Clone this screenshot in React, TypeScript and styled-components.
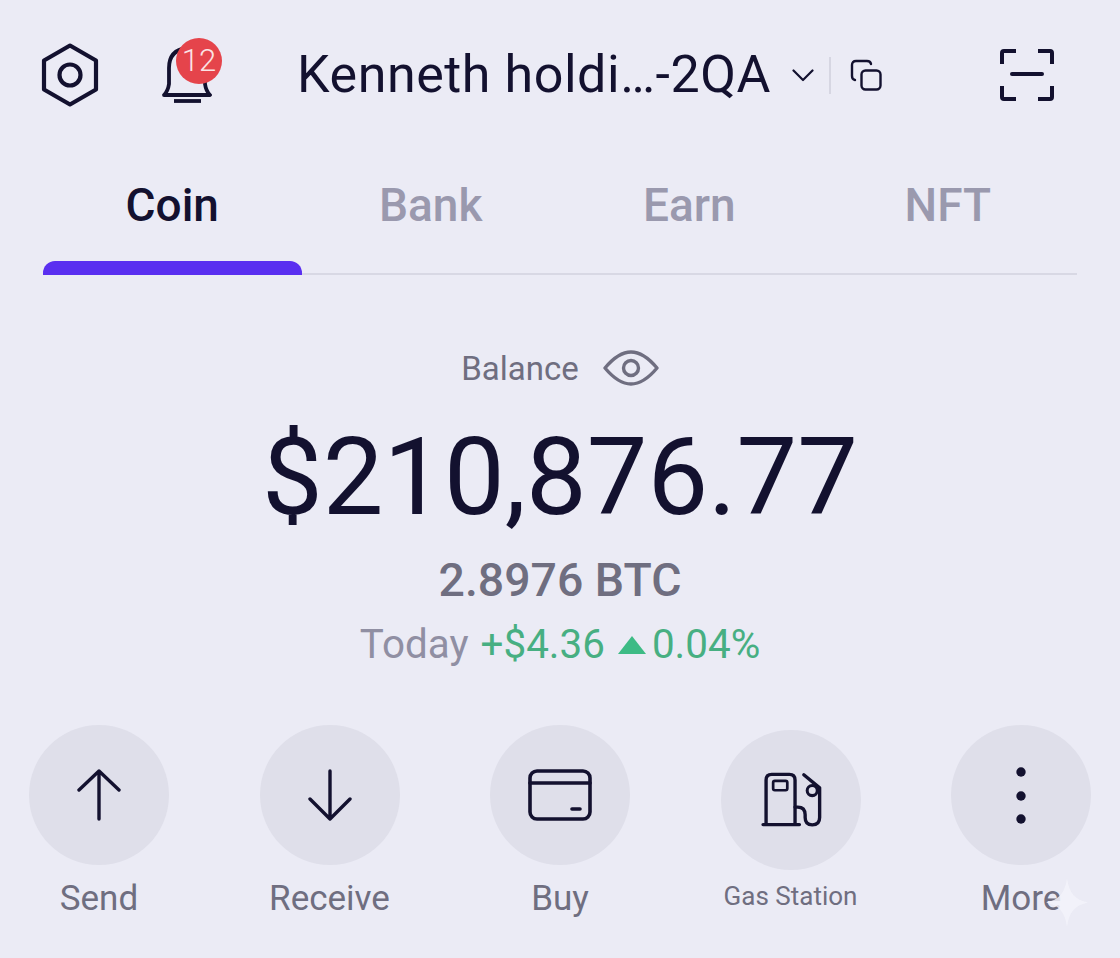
import React from "react";
import styled, { createGlobalStyle } from "styled-components";

const Global = createGlobalStyle`
  html, body { margin: 0; padding: 0; background: #ebebf5; }
  * { box-sizing: border-box; }
`;

const Page = styled.div`
  width: 1120px;
  height: 958px;
  overflow: hidden;
  position: relative;
  background: #ebebf5;
  font-family: Roboto, "Liberation Sans", sans-serif;
  color: #13112f;
`;

const Header = styled.header`
  display: flex;
  align-items: center;
  height: 70px;
  margin-top: 40px;
  padding: 0 66px 0 41px;
`;

const BellWrap = styled.div`
  position: relative;
  width: 50px;
  height: 70px;
  margin-left: 63px;
`;

const Badge = styled.span`
  position: absolute;
  left: 14px;
  top: -2px;
  width: 46px;
  height: 46px;
  border-radius: 50%;
  background: #e5444b;
  color: #fbe3e4;
  font-size: 31px;
  font-weight: 300;
  line-height: 46px;
  text-align: center;
`;

const Account = styled.h1`
  margin: 0 0 0 85px;
  font-size: 52px;
  font-weight: 400;
  line-height: 70px;
  white-space: nowrap;
  letter-spacing: 0.55px;
`;

const Chevron = styled.svg`
  margin-left: 21px;
  flex: none;
`;

const Divider = styled.span`
  width: 2px;
  height: 37px;
  margin: 0 19px 0 15px;
  background: #d6d6e2;
  flex: none;
`;

const Spring = styled.div`
  flex: 1;
`;

const Tabs = styled.nav`
  display: grid;
  grid-template-columns: repeat(4, 1fr);
  margin: 47px 43px 0;
  border-bottom: 2px solid #d8d8e4;
`;

const Tab = styled.div<{ $active?: boolean }>`
  position: relative;
  height: 116px;
  padding-top: 20px;
  text-align: center;
  font-size: 46px;
  font-weight: 500;
  line-height: 56px;
  color: ${(p) => (p.$active ? "#13112f" : "#9a99ae")};
  ${(p) =>
    p.$active &&
    `&::after {
      content: "";
      position: absolute;
      left: 0;
      right: 0;
      bottom: -2px;
      height: 14px;
      background: #5a2ff0;
      border-radius: 12px 12px 0 0;
    }`}
`;

const Summary = styled.section`
  display: flex;
  flex-direction: column;
  align-items: center;
`;

const BalanceRow = styled.div`
  display: flex;
  align-items: center;
  gap: 24px;
  margin-top: 68px;
  height: 50px;
  font-size: 33px;
  color: #6f6e80;
`;

const Amount = styled.div`
  margin-top: 19px;
  font-size: 108px;
  line-height: 130px;
  font-weight: 400;
`;

const Crypto = styled.div`
  margin-top: 11px;
  font-size: 46.4px;
  font-weight: 500;
  line-height: 54px;
  color: #6f6e80;
`;

const Change = styled.div`
  display: flex;
  align-items: center;
  margin-top: 13px;
  font-size: 40.4px;
  line-height: 50px;
  color: #47af82;
`;

const Today = styled.span`
  color: #908fa3;
  margin-right: 12px;
`;

const Triangle = styled.svg`
  margin: 0 6px 0 13px;
  flex: none;
`;

const Actions = styled.section`
  display: flex;
  justify-content: space-between;
  padding: 0 29px;
  margin-top: 55px;
`;

const Action = styled.div`
  width: 140px;
  display: flex;
  flex-direction: column;
  align-items: center;
`;

const Circle = styled.div<{ $low?: boolean }>`
  width: 140px;
  height: 140px;
  margin-top: ${(p) => (p.$low ? "5px" : "0")};
  border-radius: 50%;
  background: #dfdfea;
  display: flex;
  align-items: center;
  justify-content: center;
`;

const Label = styled.div<{ $small?: boolean }>`
  margin-top: ${(p) => (p.$small ? "6px" : "14px")};
  height: 40px;
  line-height: 40px;
  font-size: ${(p) => (p.$small ? "26px" : "35px")};
  color: #6f6e80;
  white-space: nowrap;
`;

const Sparkle = styled.svg`
  position: absolute;
  left: 1046px;
  top: 878px;
`;

const ink = { fill: "none", stroke: "#13112f", strokeLinecap: "round", strokeLinejoin: "round" } as const;

const actions = [
  {
    label: "Send",
    icon: (
      <svg width="44" height="52" viewBox="0 0 44 52" {...ink} strokeWidth="3.4">
        <path d="M22 2V50M2 21L22 2L42 21" />
      </svg>
    ),
  },
  {
    label: "Receive",
    icon: (
      <svg width="44" height="52" viewBox="0 0 44 52" {...ink} strokeWidth="3.4">
        <path d="M22 2V50M2 30L22 50L42 30" />
      </svg>
    ),
  },
  {
    label: "Buy",
    icon: (
      <svg width="64" height="52" viewBox="0 0 64 52" {...ink} strokeWidth="3.6">
        <rect x="2" y="2" width="60" height="48" rx="7" />
        <path d="M2 14H62M44 40H52" />
      </svg>
    ),
  },
  {
    label: "Gas Station",
    small: true,
    low: true,
    icon: (
      <svg width="64" height="59" viewBox="835 155 190 175" {...ink} strokeWidth="10">
        <path d="M847 314H955M856 314V182Q856 165 873 165H925Q942 165 942 182V314" />
        <rect x="877" y="184" width="42" height="28" rx="5" strokeWidth="8" />
        <path d="M942 262H950Q972 262 972 285V293Q972 315 993 315Q1015 315 1015 293V205L968 166" />
        <circle cx="993" cy="213" r="15" strokeWidth="9" />
      </svg>
    ),
  },
  {
    label: "More",
    icon: (
      <svg width="10" height="58" viewBox="0 0 10 58" fill="#13112f">
        <circle cx="5" cy="6" r="4.7" />
        <circle cx="5" cy="30" r="4.7" />
        <circle cx="5" cy="53" r="4.7" />
      </svg>
    ),
  },
];

export default function App() {
  return (
    <Page>
      <Global />
      <Header>
        <svg width="58" height="64" viewBox="0 0 58 64" {...ink} strokeWidth="4.2">
          <path d="M29 2.5L55 17.5V46.5L29 61.5L3 46.5V17.5Z" />
          <circle cx="29" cy="32" r="10.5" />
        </svg>
        <BellWrap>
          <svg width="50" height="70" viewBox="0 0 50 70" {...ink} strokeWidth="3.8">
            <path d="M2 55Q6 51 7 44V28Q7 10 25 8Q43 10 43 28V44Q44 51 48 55Z" />
            <path d="M12 61H39" strokeLinecap="butt" />
          </svg>
          <Badge>12</Badge>
        </BellWrap>
        <Account>Kenneth holdi…-2QA</Account>
        <Chevron width="22" height="13" viewBox="0 0 22 13" {...ink} strokeWidth="2.2">
          <path d="M1.5 1.5L11 11L20.5 1.5" />
        </Chevron>
        <Divider />
        <svg width="32" height="32" viewBox="0 0 32 32" {...ink} strokeWidth="2.4">
          <rect x="11.5" y="11.5" width="19" height="19" rx="4" />
          <path d="M5 21Q2 20.5 2 17V6Q2 2 6 2H17Q20.5 2 21 5" />
        </svg>
        <Spring />
        <svg width="54" height="52" viewBox="0 0 54 52" {...ink} strokeWidth="4" strokeLinecap="butt">
          <path d="M2 15V4Q2 2 4 2H16M38 2H50Q52 2 52 4V15M2 37V48Q2 50 4 50H16M38 50H50Q52 50 52 48V37" />
          <path d="M12 25H42" strokeLinecap="round" />
        </svg>
      </Header>
      <Tabs>
        <Tab $active>Coin</Tab>
        <Tab>Bank</Tab>
        <Tab>Earn</Tab>
        <Tab>NFT</Tab>
      </Tabs>
      <Summary>
        <BalanceRow>
          <span>Balance</span>
          <svg width="56" height="36" viewBox="0 0 56 36" fill="none" stroke="#6f6e80" strokeWidth="3.4" strokeLinejoin="round">
            <path d="M2 18C12 6 21 2 28 2C35 2 44 6 54 18C44 30 35 34 28 34C21 34 12 30 2 18Z" />
            <circle cx="28" cy="18" r="7.5" />
          </svg>
        </BalanceRow>
        <Amount>$210,876.77</Amount>
        <Crypto>2.8976 BTC</Crypto>
        <Change>
          <Today>Today</Today>
          <span>+$4.36</span>
          <Triangle width="28" height="18" viewBox="0 0 28 18" fill="#3dbb85">
            <path d="M14 0L28 18H0Z" />
          </Triangle>
          <span>0.04%</span>
        </Change>
      </Summary>
      <Actions>
        {actions.map((a) => (
          <Action key={a.label}>
            <Circle $low={a.low}>{a.icon}</Circle>
            <Label $small={a.small}>{a.label}</Label>
          </Action>
        ))}
      </Actions>
      <Sparkle width="42" height="49" viewBox="0 0 42 49" fill="#f3f3fa" fillOpacity="0.85">
        <path d="M21 0C23 15 29 22 42 24.5C29 27 23 34 21 49C19 34 13 27 0 24.5C13 22 19 15 21 0Z" />
      </Sparkle>
    </Page>
  );
}
